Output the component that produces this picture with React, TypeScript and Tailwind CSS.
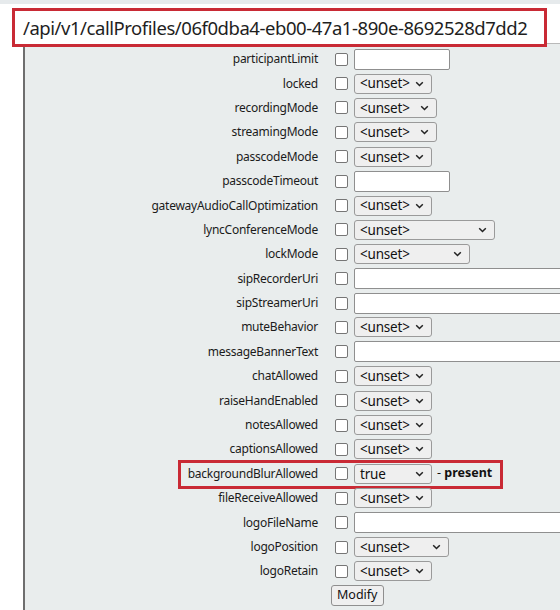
import React from 'react'

type Field = {
    name: string
    kind: 'text' | 'select'
    width: string
    value?: string
    note?: string
    flagged?: boolean
}

const fields: Field[] = [
    { name: 'participantLimit', kind: 'text', width: 'w-[96px]' },
    { name: 'locked', kind: 'select', width: 'w-[78px]' },
    { name: 'recordingMode', kind: 'select', width: 'w-[83px]' },
    { name: 'streamingMode', kind: 'select', width: 'w-[83px]' },
    { name: 'passcodeMode', kind: 'select', width: 'w-[78px]' },
    { name: 'passcodeTimeout', kind: 'text', width: 'w-[96px]' },
    { name: 'gatewayAudioCallOptimization', kind: 'select', width: 'w-[78px]' },
    { name: 'lyncConferenceMode', kind: 'select', width: 'w-[141px]' },
    { name: 'lockMode', kind: 'select', width: 'w-[116px]' },
    { name: 'sipRecorderUri', kind: 'text', width: 'w-[240px]' },
    { name: 'sipStreamerUri', kind: 'text', width: 'w-[240px]' },
    { name: 'muteBehavior', kind: 'select', width: 'w-[78px]' },
    { name: 'messageBannerText', kind: 'text', width: 'w-[240px]' },
    { name: 'chatAllowed', kind: 'select', width: 'w-[78px]' },
    { name: 'raiseHandEnabled', kind: 'select', width: 'w-[78px]' },
    { name: 'notesAllowed', kind: 'select', width: 'w-[78px]' },
    { name: 'captionsAllowed', kind: 'select', width: 'w-[78px]' },
    { name: 'backgroundBlurAllowed', kind: 'select', width: 'w-[78px]', value: 'true', note: 'present', flagged: true },
    { name: 'fileReceiveAllowed', kind: 'select', width: 'w-[78px]' },
    { name: 'logoFileName', kind: 'text', width: 'w-[240px]' },
    { name: 'logoPosition', kind: 'select', width: 'w-[95px]' },
    { name: 'logoRetain', kind: 'select', width: 'w-[78px]' },
]

function Chevron() {
    return (
        <svg width="9" height="6" viewBox="0 0 9 6" className="shrink-0">
            <polyline points="1.2,1.2 4.5,4.5 7.8,1.2" fill="none" stroke="#222" strokeWidth="1.5" />
        </svg>
    )
}

function Checkbox() {
    return <div className="w-[13px] h-[13px] shrink-0 rounded-[2px] border border-[#767676] bg-white"></div>
}

function Row({ field }: { field: Field }) {
    return (
        <div className="relative flex items-center h-[24.4px]">
            {field.flagged && (
                <div className="absolute left-[153px] w-[325px] top-[-2px] h-[29px] border-[3px] border-[#c92a35] pointer-events-none"></div>
            )}
            <div className="w-[293px] shrink-0 text-right text-[12px] tracking-[-0.25px] text-[#1b1b1b] whitespace-nowrap">{field.name}</div>
            <div className="ml-[17px]">
                <Checkbox />
            </div>
            <div className="ml-[6px] flex items-center">
                {field.kind === 'text' ? (
                    <div className={`${field.width} h-[21px] shrink-0 rounded-[2px] border border-[#8f8f8f] bg-white`}></div>
                ) : (
                    <div className={`${field.width} h-[20px] shrink-0 flex items-center justify-between pl-[5px] pr-[7px] rounded-[3px] border border-[#9a9a9a] bg-[#efefef] text-[13.5px] tracking-[-0.2px] text-[#111]`}>
                        <span>{field.value ?? '<unset>'}</span>
                        <Chevron />
                    </div>
                )}
                {field.note && (
                    <span className="ml-[5px] text-[12.5px] text-[#111] whitespace-nowrap">
                        - <b>{field.note}</b>
                    </span>
                )}
            </div>
        </div>
    )
}

export default function App() {
    return (
        <div className="w-[560px] h-[610px] bg-white overflow-hidden" style={{ fontFamily: '"Noto Sans", sans-serif' }}>
            <div className="h-[4px] bg-[#e6eaec]"></div>
            <div className="relative z-10 ml-[12px] mt-[4px] w-[535px] h-[39px] flex items-center px-[8px] border-[3px] border-[#c92a35] bg-white text-[18.5px] tracking-[-0.45px] text-[#1e1e1e] whitespace-nowrap">
                /api/v1/callProfiles/06f0dba4-eb00-47a1-890e-8692528d7dd2
            </div>
            <div className="-mt-[4px] ml-[23px] h-[567px] border-l-2 border-t border-l-[#6e6e6e] border-t-[#b9b9b9] bg-[#e9eded] pt-[3px]">
                {fields.map((f) => (
                    <Row key={f.name} field={f} />
                ))}
                <div className="flex h-[24px] items-center">
                    <div className="ml-[306px] h-[21px] px-[5px] flex items-center rounded-[3px] border border-[#8f8f8f] bg-[#efefef] text-[12.5px] text-[#111]">
                        Modify
                    </div>
                </div>
            </div>
        </div>
    )
}
